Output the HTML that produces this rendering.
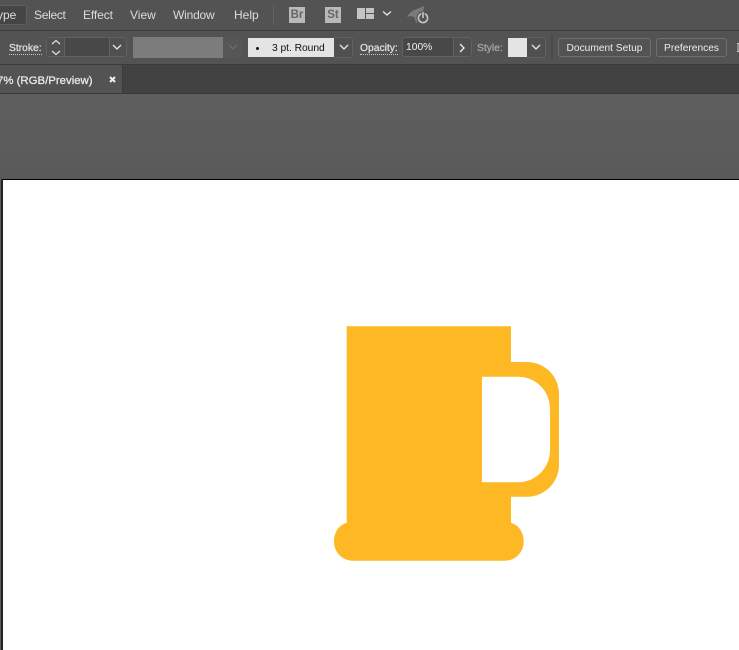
<!DOCTYPE html>
<html><head><meta charset="utf-8">
<style>
html,body{margin:0;padding:0;width:739px;height:650px;overflow:hidden;background:#fff}
#r{position:relative;width:739px;height:650px;overflow:hidden;font-family:"Liberation Sans",sans-serif;color:#e8e8e8}
.a{position:absolute}
.t{position:absolute;white-space:nowrap;line-height:14px}
.m{font-size:12px;top:8px;color:#dcdcdc}
.s{font-size:10.3px;white-space:nowrap;position:absolute;line-height:12px}
.l{-webkit-text-stroke:.25px currentColor}
svg.i{position:absolute;overflow:visible}
</style></head><body><div id="r">
<div class="a" style="left:0;top:0;width:739px;height:30px;background:#535353"></div>
<div class="a" style="left:0;top:30px;width:739px;height:1px;background:#3c3c3c"></div>
<div class="a" style="left:0;top:31px;width:739px;height:33px;background:#535353"></div>
<div class="a" style="left:0;top:64px;width:739px;height:30px;background:#424242;border-top:1px solid #3a3a3a;border-bottom:1px solid #393939;box-sizing:border-box"></div>
<div class="a" style="left:0;top:94px;width:739px;height:85px;background:linear-gradient(#5e5e5e,#5a5a5a)"></div>

<!-- Menu -->
<div class="a" style="left:-8px;top:5px;width:33px;height:18px;background:#454545;border:1px solid #5e5e5e;border-radius:3px"></div>
<div class="t m" style="left:-3px">ype</div>
<div class="t m" style="left:34px;letter-spacing:-.3px">Select</div>
<div class="t m" style="left:83px;letter-spacing:-.1px">Effect</div>
<div class="t m" style="left:130px">View</div>
<div class="t m" style="left:173px;letter-spacing:-.2px">Window</div>
<div class="t m" style="left:234px">Help</div>
<div class="a" style="left:273px;top:5px;width:1px;height:20px;background:#616161"></div>
<div class="a" style="left:289px;top:7px;width:16px;height:16px;background:#b9b9b9;color:#666;font:bold 11.5px/16px 'Liberation Sans',sans-serif;text-align:center">Br</div>
<div class="a" style="left:325px;top:7px;width:16px;height:16px;background:#b9b9b9;color:#666;font:bold 11.5px/16px 'Liberation Sans',sans-serif;text-align:center">St</div>
<div class="a" style="left:357px;top:8px;width:8px;height:11px;background:#c4c4c4"></div>
<div class="a" style="left:366px;top:8px;width:8px;height:5px;background:#c4c4c4"></div>
<div class="a" style="left:366px;top:14px;width:8px;height:5px;background:#c4c4c4"></div>
<svg class="i" style="left:381px;top:10px" width="12" height="7"><path d="M2 1.5 L6 5 L10 1.5" fill="none" stroke="#e6e6e6" stroke-width="1.3"/></svg>
<svg class="i" style="left:400px;top:0" width="36" height="30">
<path d="M7 17 C9 13 13 10 17 9 L24 6 C24 11 22 14 20 16 L17 23 C15 21 15 19 14 17 C12 16 10 16 7 17Z" fill="#7a7a7a"/>
<circle cx="23" cy="18" r="6.6" fill="#535353"/>
<circle cx="23" cy="18" r="4.6" fill="none" stroke="#c4c4c4" stroke-width="1.6"/>
<path d="M23 11.5V18" stroke="#535353" stroke-width="3.4"/>
<path d="M23 12V18" stroke="#c4c4c4" stroke-width="1.6"/>
</svg>

<!-- Toolbar -->
<div class="s l" style="left:9px;top:43px;color:#e0e0e0;border-bottom:1px dotted #c8c8c8;line-height:11px;height:11px">Stroke:</div>
<div class="a" style="left:46px;top:37px;width:79px;height:18px;border:1px solid #616161;border-radius:3px;background:#484848"></div>
<div class="a" style="left:47px;top:38px;width:17px;height:18px;background:#505050;border-right:1px solid #616161"></div>
<div class="a" style="left:109px;top:38px;width:16px;height:18px;background:#505050;border-left:1px solid #616161"></div>
<svg class="i" style="left:50px;top:38px" width="12" height="18"><path d="M2 6 L6 2.5 L10 6 M2 13 L6 16.5 L10 13" fill="none" stroke="#e4e4e4" stroke-width="1.2"/></svg>
<svg class="i" style="left:111px;top:44px" width="12" height="7"><path d="M2 1 L6 5 L10 1" fill="none" stroke="#e8e8e8" stroke-width="1.3"/></svg>
<div class="a" style="left:133px;top:37px;width:90px;height:21px;background:#7c7c7c"></div>
<div class="a" style="left:223px;top:37px;width:19px;height:21px;background:#565656"></div>
<svg class="i" style="left:227px;top:44px" width="12" height="7"><path d="M2 1 L6 5 L10 1" fill="none" stroke="#6b6b6b" stroke-width="1.3"/></svg>
<div class="a" style="left:248px;top:38px;width:86px;height:19px;background:#e4e4e4"></div>
<div class="a" style="left:256px;top:46.5px;width:3px;height:3px;border-radius:50%;background:#111"></div>
<div class="s" style="left:272px;top:43px;color:#111;letter-spacing:-.05px">3 pt. Round</div>
<div class="a" style="left:334px;top:37px;width:18px;height:19px;background:#505050;border:1px solid #616161;border-left:0;border-radius:0 3px 3px 0"></div>
<svg class="i" style="left:338px;top:44px" width="12" height="7"><path d="M2 1 L6 5 L10 1" fill="none" stroke="#e8e8e8" stroke-width="1.3"/></svg>
<div class="s l" style="left:360px;top:43px;color:#e0e0e0;border-bottom:1px dotted #c8c8c8;line-height:11px;height:11px">Opacity:</div>
<div class="a" style="left:402px;top:37px;width:68px;height:18px;border:1px solid #616161;border-radius:3px;background:#484848"></div>
<div class="a" style="left:453px;top:38px;width:17px;height:18px;background:#505050;border-left:1px solid #616161"></div>
<div class="s" style="left:406px;top:42px;color:#f0f0f0">100%</div>
<svg class="i" style="left:458px;top:42px" width="8" height="12"><path d="M2 2 L6 6 L2 10" fill="none" stroke="#e8e8e8" stroke-width="1.4"/></svg>
<div class="s l" style="left:477px;top:43px;color:#a8a8a8;line-height:12px">Style:</div>
<div class="a" style="left:508px;top:38px;width:19px;height:19px;background:#e4e4e4"></div>
<div class="a" style="left:527px;top:37px;width:18px;height:19px;background:#505050;border:1px solid #616161;border-left:0;border-radius:0 3px 3px 0"></div>
<svg class="i" style="left:530px;top:44px" width="12" height="7"><path d="M2 1 L6 5 L10 1" fill="none" stroke="#e8e8e8" stroke-width="1.3"/></svg>
<div class="a" style="left:551px;top:35px;width:2px;height:25px;background:#4a4a4a"></div>
<div class="a" style="left:558px;top:38px;width:91px;height:17px;border:1px solid #6f6f6f;border-radius:3px;text-align:center;font-size:10.2px;line-height:20px;color:#ececec">Document Setup</div>
<div class="a" style="left:656px;top:38px;width:69px;height:17px;border:1px solid #6f6f6f;border-radius:3px;text-align:center;font-size:10.2px;line-height:20px;color:#ececec">Preferences</div>
<svg class="i" style="left:736px;top:43px" width="4" height="9"><path d="M1 0.5H3M2 0.5V8.5M1 8.5H3" fill="none" stroke="#c8c8c8" stroke-width="1"/></svg>

<!-- Tab -->
<div class="a" style="left:0;top:65px;width:122px;height:28px;background:#535353;border-right:1px solid #3a3a3a"></div>
<div class="s l" style="left:-3px;top:74px;color:#ececec;font-size:11.4px;line-height:14px">7% (RGB/Preview)</div>
<svg class="i" style="left:108px;top:75px" width="9" height="9"><path d="M2 2 L7 7 M7 2 L2 7" stroke="#f0f0f0" stroke-width="2"/></svg>

<!-- Canvas -->
<div class="a" style="left:2px;top:179px;width:737px;height:1px;background:#000"></div>
<div class="a" style="left:0;top:179px;width:1px;height:471px;background:#5c5c5c"></div>
<div class="a" style="left:1px;top:179px;width:2px;height:471px;background:#222"></div>
<div class="a" style="left:3px;top:180px;width:736px;height:470px;background:#fff"></div>

<svg class="a" style="left:0;top:0" width="739" height="650">
<path fill="#fdb823" fill-rule="evenodd" d="M346.7 326.3H511V362H527C544.7 362 559 376.3 559 394V464.7C559 482.4 544.7 496.7 527 496.7H511V522.7C518.6 525 523.7 532 523.7 541.7C523.7 552.2 515.2 560.7 504.7 560.7H353C342.5 560.7 334 552.2 334 541.7C334 532 339.1 525 346.7 522.7Z M482 376.7V482.3H518C535.7 482.3 550 468 550 450.3V408.7C550 391 535.7 376.7 518 376.7Z"/>
</svg>
</div></body></html>
